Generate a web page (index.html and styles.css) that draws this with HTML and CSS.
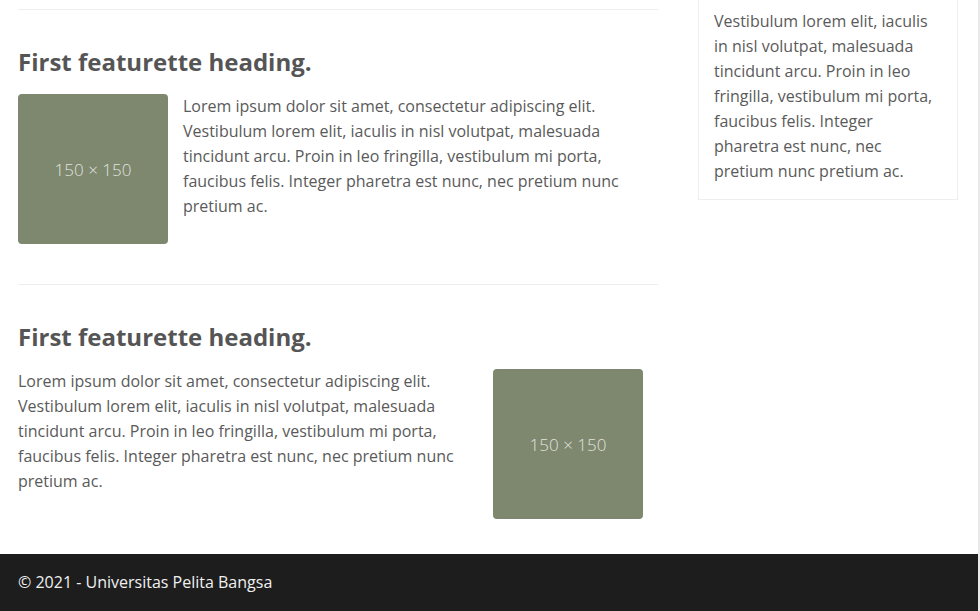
FILE: index.html
```html
<!DOCTYPE html>
<html lang="en">
<head>
<meta charset="utf-8">
<title>Featurette</title>
<link rel="stylesheet" href="styles.css">
</head>
<body>
<div class="page">
  <main class="main">
    <div class="content">
      <hr class="divider">
      <section class="featurette">
        <h2 class="featurette-heading">First featurette heading.</h2>
        <div class="media">
          <div class="placeholder">150 × 150</div>
          <p class="media-text">Lorem ipsum dolor sit amet, consectetur adipiscing elit. Vestibulum lorem elit, iaculis in nisl volutpat, malesuada tincidunt arcu. Proin in leo fringilla, vestibulum mi porta, faucibus felis. Integer pharetra est nunc, nec pretium nunc pretium ac.</p>
        </div>
      </section>
      <hr class="divider">
      <section class="featurette">
        <h2 class="featurette-heading">First featurette heading.</h2>
        <div class="media media-reverse">
          <p class="media-text">Lorem ipsum dolor sit amet, consectetur adipiscing elit. Vestibulum lorem elit, iaculis in nisl volutpat, malesuada tincidunt arcu. Proin in leo fringilla, vestibulum mi porta, faucibus felis. Integer pharetra est nunc, nec pretium nunc pretium ac.</p>
          <div class="placeholder">150 × 150</div>
        </div>
      </section>
    </div>
    <aside class="sidebar">
      <div class="sidebar-box">
        <p class="sidebar-text">Vestibulum lorem elit, iaculis in nisl volutpat, malesuada tincidunt arcu. Proin in leo fringilla, vestibulum mi porta, faucibus felis. Integer pharetra est nunc, nec pretium nunc pretium ac.</p>
      </div>
    </aside>
  </main>
  <footer class="footer">© 2021 - Universitas Pelita Bangsa</footer>
</div>
</body>
</html>
```
FILE: styles.css
```css
html {
  background: #e9e9e9;
}
body {
  margin: 0 2px 0 0;
  background: #ffffff;
  font-family: "Open Sans", "Noto Sans", sans-serif;
  font-size: 16px;
  line-height: 25px;
  color: #5a5a5a;
}
.page {
  display: flex;
  flex-direction: column;
}
.main {
  display: flex;
  gap: 40px;
  padding: 0 20px 0 18px;
}
.content {
  width: 640px;
  padding-bottom: 35px;
}
.divider {
  margin: 9px 0 0;
  border: 0;
  border-top: 1px solid #eeeeee;
  height: 0;
}
.divider + .featurette + .divider {
  margin-top: 40px;
}
.featurette {
  padding-top: 39px;
}
.featurette-heading {
  margin: 0 0 19px;
  font-size: 24px;
  line-height: 26px;
  font-weight: 700;
  color: #555555;
}
.media {
  display: flex;
  align-items: flex-start;
  gap: 15px;
}
.media-reverse {
  padding-right: 15px;
}
.media-text {
  margin: 0;
  flex: 1;
}
.placeholder {
  flex: none;
  width: 150px;
  height: 150px;
  border-radius: 4px;
  background: #7e886f;
  color: rgba(255, 255, 255, 0.78);
  font-weight: 300;
  font-size: 17px;
  padding-top: 1px;
  box-sizing: border-box;
  display: flex;
  align-items: center;
  justify-content: center;
}
.sidebar {
  width: 260px;
}
.sidebar-box {
  border: 1px solid #eeeeee;
  border-top: 0;
  padding: 9px 15px 15px;
}
.sidebar-text {
  margin: 0;
}
.footer {
  background: #1d1d1d;
  color: #f0f0f0;
  padding: 16px 18px;
}
```
